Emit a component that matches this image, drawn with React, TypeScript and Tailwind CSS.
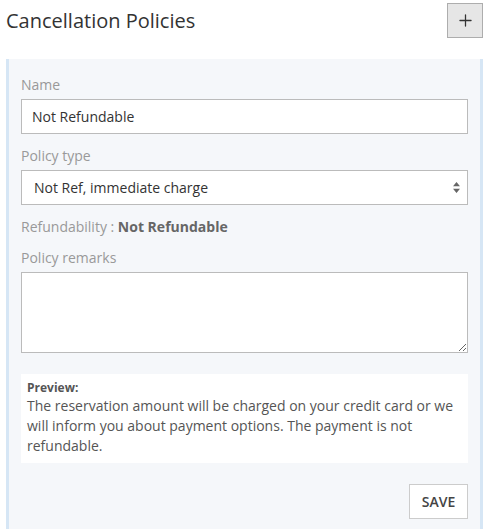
import { Plus } from 'lucide-react';

const font = { fontFamily: '"Open Sans", sans-serif' };

function Label({ children }: { children: React.ReactNode }) {
  return <label className="mb-1 block text-sm leading-5 text-[#999]">{children}</label>;
}

export default function App() {
  return (
    <div className="min-h-[529px] bg-white pl-[6px] pr-[4px] pt-[3px]" style={font}>
      <div className="flex items-center justify-between">
        <h1 className="text-[20px] leading-7 text-[#333]">Cancellation Policies</h1>
        <button
          type="button"
          className="flex h-[35px] w-[36px] items-center justify-center border border-[#adadad] bg-[#e6e6e6] text-[#333]"
        >
          <Plus className="size-[19px]" strokeWidth={1.6} />
        </button>
      </div>

      <div className="mt-[21px] border-x-[3px] border-[#d6e6f5] bg-[#f5f7fa] px-3 pb-6 pt-4">
        <Label>Name</Label>
        <input
          className="block h-[35px] w-full border border-[#bbb] bg-white px-[10px] text-sm text-[#333] outline-none"
          defaultValue="Not Refundable"
          style={font}
        />

        <div className="mt-3">
          <Label>Policy type</Label>
          <div className="relative">
            <select
              className="block h-[35px] w-full appearance-none border border-[#bbb] bg-white px-3 text-sm text-[#333] outline-none"
              style={font}
              defaultValue="nr"
            >
              <option value="nr">Not Ref, immediate charge</option>
            </select>
            <svg className="pointer-events-none absolute right-[8px] top-[12px]" width="7" height="11" viewBox="0 0 7 11">
              <path d="M3.5 0L7 4.2H0z M3.5 11L0 6.8h7z" fill="#666" />
            </svg>
          </div>
        </div>

        <p className="mt-3 text-sm leading-5 text-[#999]">
          Refundability : <span className="font-bold text-[#666]">Not Refundable</span>
        </p>

        <div className="mt-[11px]">
          <Label>Policy remarks</Label>
          <textarea
            className="block h-[81px] w-full border border-[#bbb] bg-white px-[10px] py-2 text-sm text-[#333] outline-none"
            style={font}
          />
        </div>

        <div className="mt-[21px] bg-white px-[6px] pb-[7px] pt-[5px] text-[#555]">
          <p className="text-xs font-bold leading-[17px]">Preview:</p>
          <p className="text-sm leading-5">
            The reservation amount will be charged on your credit card or we will inform you about payment
            options. The payment is not refundable.
          </p>
        </div>

        <div className="mt-[21px] flex justify-end">
          <button
            type="button"
            className="h-[35px] w-[59px] border border-[#ccc] bg-white text-sm font-semibold text-[#444]"
            style={font}
          >
            SAVE
          </button>
        </div>
      </div>
    </div>
  );
}
